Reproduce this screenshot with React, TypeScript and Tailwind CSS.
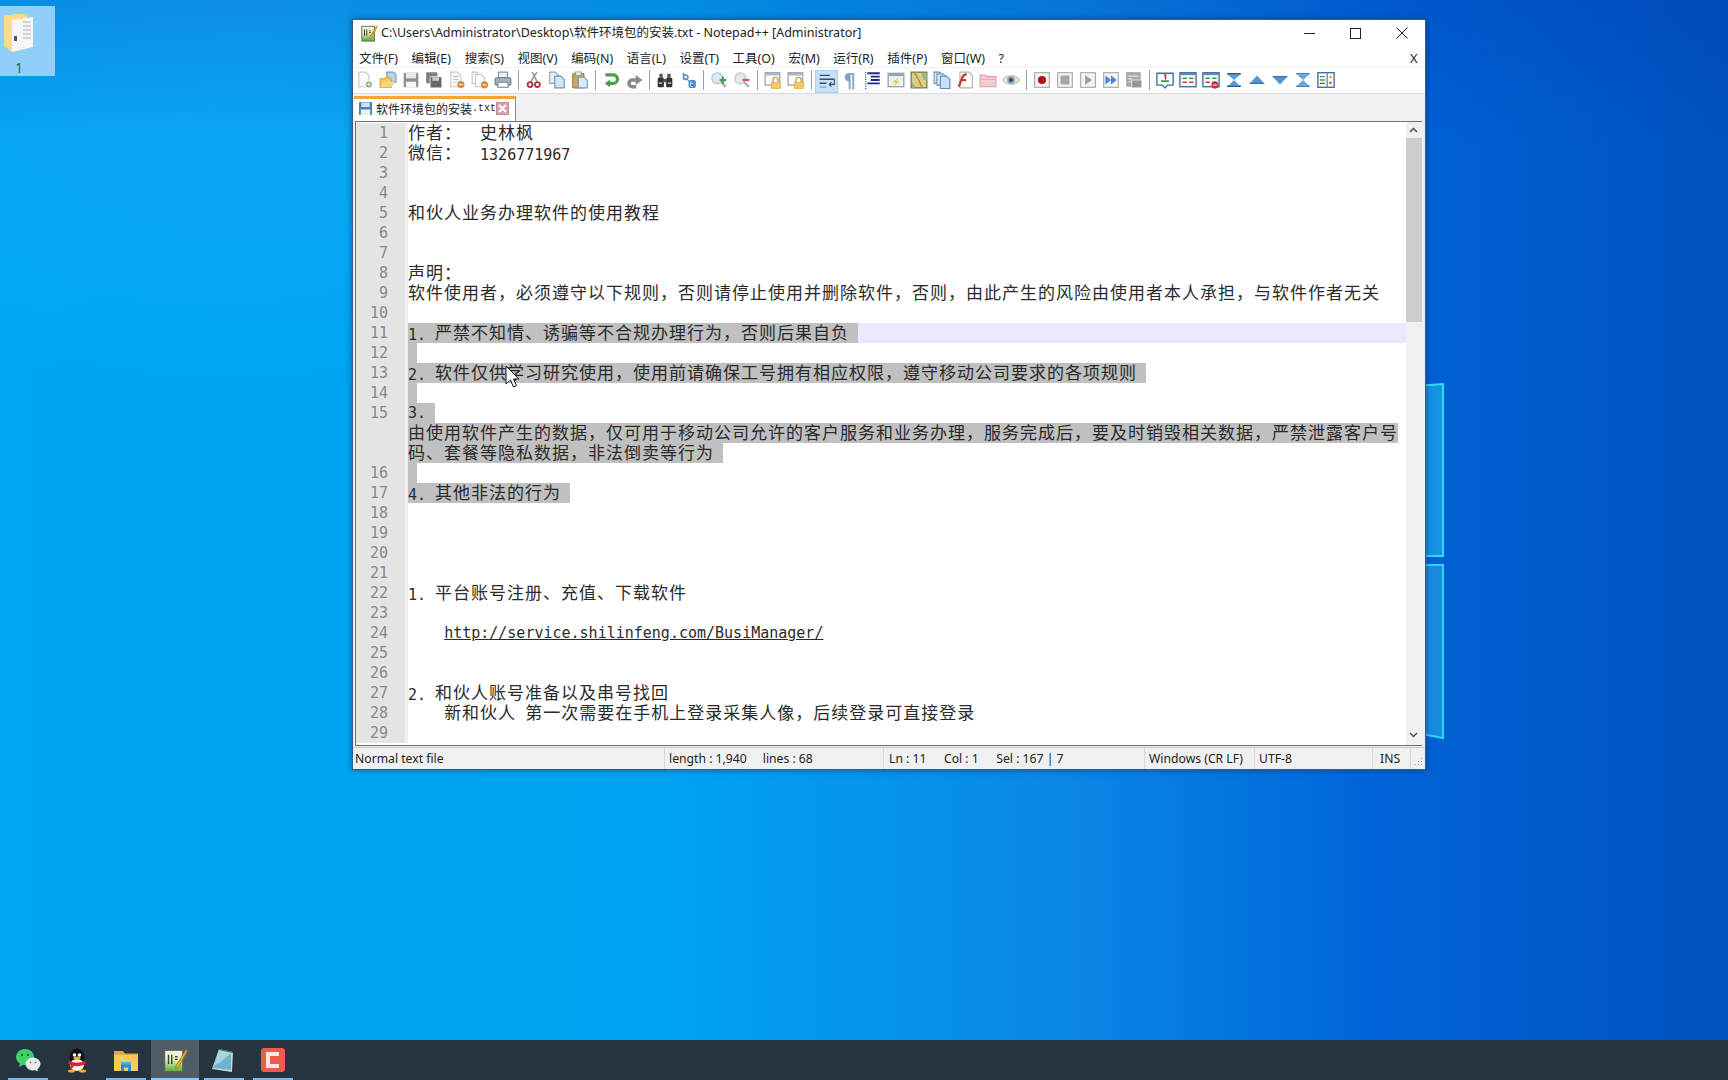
import React from "react";

const CJK = /([\u3000-\u303f\u3400-\u9fff\uff00-\uffef]+)/;

function Txt({ text }: { text: string }) {
  return (
    <>
      {text.split(CJK).map((s, i) =>
        CJK.test(s) ? (
          <span key={i} className="text-[17px] leading-none tracking-[1px] align-[1px] [font-family:'Noto_Sans_CJK_SC',sans-serif]">{s}</span>
        ) : (
          <span key={i}>{s}</span>
        )
      )}
    </>
  );
}

type Row = { n?: number; t?: string; sel?: boolean; eol?: boolean; cur?: boolean; url?: boolean };

const rows: Row[] = [
  { n: 1, t: "作者：  史林枫" },
  { n: 2, t: "微信：  1326771967" },
  { n: 3 },
  { n: 4 },
  { n: 5, t: "和伙人业务办理软件的使用教程" },
  { n: 6 },
  { n: 7 },
  { n: 8, t: "声明：" },
  { n: 9, t: "软件使用者，必须遵守以下规则，否则请停止使用并删除软件，否则，由此产生的风险由使用者本人承担，与软件作者无关" },
  { n: 10 },
  { n: 11, t: "1. 严禁不知情、诱骗等不合规办理行为，否则后果自负", sel: true, eol: true, cur: true },
  { n: 12, t: "", sel: true, eol: true },
  { n: 13, t: "2. 软件仅供学习研究使用，使用前请确保工号拥有相应权限，遵守移动公司要求的各项规则", sel: true, eol: true },
  { n: 14, t: "", sel: true, eol: true },
  { n: 15, t: "3.", sel: true, eol: true },
  { t: "由使用软件产生的数据，仅可用于移动公司允许的客户服务和业务办理，服务完成后，要及时销毁相关数据，严禁泄露客户号", sel: true },
  { t: "码、套餐等隐私数据，非法倒卖等行为", sel: true, eol: true },
  { n: 16, t: "", sel: true, eol: true },
  { n: 17, t: "4. 其他非法的行为", sel: true, eol: true },
  { n: 18 },
  { n: 19 },
  { n: 20 },
  { n: 21 },
  { n: 22, t: "1. 平台账号注册、充值、下载软件" },
  { n: 23 },
  { n: 24, t: "    http://service.shilinfeng.com/BusiManager/", url: true },
  { n: 25 },
  { n: 26 },
  { n: 27, t: "2. 和伙人账号准备以及串号找回" },
  { n: 28, t: "    新和伙人 第一次需要在手机上登录采集人像，后续登录可直接登录" },
  { n: 29 },
];

const menus = ["文件(F)", "编辑(E)", "搜索(S)", "视图(V)", "编码(N)", "语言(L)", "设置(T)", "工具(O)", "宏(M)", "运行(R)", "插件(P)", "窗口(W)", "?"];

const I = ({ children }: { children: React.ReactNode }) => (
  <svg viewBox="0 0 16 16" className="w-[18px] h-[18px]">{children}</svg>
);

const Page = ({ x = 2.5, y = 1, w = 9, h = 13, f = "#fbfbfb", s = "#c4c8cc" }: any) => (
  <path d={`M${x} ${y}h${w - 3}l3 3v${h - 3}h-${w}z`} fill={f} stroke={s} strokeWidth="1" />
);

const Win = ({ lock = false }: { lock?: boolean }) => (
  <>
    <rect x="1" y="1.5" width="13" height="11" fill="#fff" stroke="#8b97a3" />
    <rect x="1" y="1.5" width="13" height="2.5" fill="#a9b8c6" />
    {lock && (
      <>
        <path d="M8 10V8a2.3 2.3 0 0 1 4.6 0v2" fill="none" stroke="#c8a040" strokeWidth="1.2" />
        <rect x="6.5" y="10" width="8" height="5.5" fill="#f4cb60" stroke="#d8a838" strokeWidth=".6" />
      </>
    )}
  </>
);

const BoxI = ({ children }: { children: React.ReactNode }) => (
  <I>
    <rect x="1.5" y="1.5" width="13" height="13" fill="#f4f4f4" stroke="#a8a8a8" />
    {children}
  </I>
);

const Bm = ({ children }: { children?: React.ReactNode }) => (
  <I>
    <rect x=".8" y="1.5" width="14.4" height="12.5" fill="#fff" stroke="#3e6ea0" strokeWidth="1.2" />
    <rect x="1" y="1.5" width="14" height="2.2" fill="#5a8ac0" />
    <path d="M3 6.5h4M9 6.5h4" stroke="#3e9a44" strokeWidth="1.4" />
    <path d="M3 10h4M9 10h4" stroke="#c83c3c" strokeWidth="1.4" />
    {children}
  </I>
);

const tb: React.ReactNode[] = [
  <I key="new"><Page /><circle cx="11.5" cy="12" r="3" fill="#6fb56a" stroke="#fff" strokeWidth=".6" /><path d="M10 12h3M11.5 10.5v3" stroke="#fff" strokeWidth=".9" /></I>,
  <I key="open"><path d="M7 1h6l2 2v7H7z" fill="#bcd4ea" stroke="#6f9cc4" /><path d="M1 7h4l1-1.5h3L10 7h1v7.5H1z" fill="#f1c860" stroke="#d8a640" /><path d="M1 14.5l2-5h11l-3 5z" fill="#f7d77e" /></I>,
  <I key="save"><rect x="1.5" y="1.5" width="13" height="13" rx="1" fill="#8a9096" /><rect x="3.5" y="1.5" width="9" height="5" fill="#e6e8ea" /><rect x="3.5" y="9.5" width="9" height="5" fill="#f4f4f4" /></I>,
  <I key="saveall"><rect x="1" y="1" width="10" height="10" rx="1" fill="#7b8084" /><rect x="4.5" y="5" width="10.5" height="10" rx="1" fill="#666a6e" stroke="#fff" strokeWidth=".7" /><rect x="6.5" y="5.5" width="6" height="3.2" fill="#c9cbcd" /></I>,
  <I key="close"><Page /><path d="M4.5 5h5M4.5 7.5h5M4.5 10h3" stroke="#bcc0c4" /><circle cx="11.5" cy="12" r="3.2" fill="#e0853a" /><path d="M9.8 12h3.4" stroke="#fff" /></I>,
  <I key="closeall"><Page x={1} y={1} w={7} h={10} /><Page x={4} y={3} w={8} h={11} /><circle cx="12" cy="12.3" r="3.2" fill="#e0853a" /><path d="M10.3 12.3h3.4" stroke="#fff" /></I>,
  <I key="print"><rect x="4" y="1" width="8" height="5" fill="#eef1f4" stroke="#7c8c9c" /><rect x="1" y="6" width="14" height="6.5" rx="1.5" fill="#a5b0bb" stroke="#6b7987" /><rect x="3.5" y="10" width="9" height="4.5" fill="#fff" stroke="#7c8c9c" /></I>,
  "s",
  <I key="cut"><path d="M5 10L10.5 1M11 10L6.5 1" stroke="#8e959c" strokeWidth="1.3" /><circle cx="4.5" cy="12" r="2.2" fill="none" stroke="#b5343a" strokeWidth="1.6" /><circle cx="11" cy="12" r="2.2" fill="none" stroke="#b5343a" strokeWidth="1.6" /></I>,
  <I key="copy"><Page x={1.5} y={1} w={8} h={10} f="#e8eef5" s="#8aa5c2" /><Page x={6} y={4.5} w={8.5} h={10.5} f="#d4e4f4" s="#6d95bf" /></I>,
  <I key="paste"><rect x="1.5" y="2" width="10" height="13" rx="1" fill="#cda468" stroke="#a87f44" /><rect x="4" y=".8" width="5" height="3" fill="#e6e6e6" stroke="#888" strokeWidth=".6" /><Page x={6.5} y={5.5} w={8} h={9.5} f="#dceaf7" s="#7499bf" /></I>,
  "s",
  <I key="undo"><path d="M3 3.5h7a3.7 3.7 0 0 1 0 7.5H6" fill="none" stroke="#47a047" strokeWidth="2.8" /><path d="M7 7.5L2.5 11l4.5 3.5z" fill="#47a047" /></I>,
  <I key="redo"><path d="M13 8H6.5a3 3 0 0 0 0 6H10" fill="none" stroke="#868a8e" strokeWidth="3" /><path d="M9.5 3.5l6 4.5-6 4.5z" fill="#868a8e" /></I>,
  "s",
  <I key="find"><rect x="1.5" y="6" width="5.5" height="8.5" rx="1" fill="#2e3236" /><rect x="9" y="6" width="5.5" height="8.5" rx="1" fill="#2e3236" /><rect x="3" y="2.5" width="3" height="4" fill="#54585c" /><rect x="10" y="2.5" width="3" height="4" fill="#54585c" /><rect x="6.5" y="7" width="3" height="3" fill="#54585c" /><rect x="2.5" y="10" width="3" height="1.5" fill="#aeb2b6" /><rect x="10.5" y="10" width="3" height="1.5" fill="#aeb2b6" /></I>,
  <I key="replace"><path d="M4 1.5v6M4 5.5a2 2 0 1 1 0 .1" fill="none" stroke="#4a90d0" strokeWidth="1.4" /><path d="M6 6.5l3 2.5" stroke="#4a90d0" /><rect x="8.5" y="8" width="6.5" height="7" rx="1.5" fill="#4d8fcd" /><path d="M10.5 9.5v4h2M10.5 11.3h2" stroke="#dcebf7" /></I>,
  "s",
  <I key="zi"><circle cx="6.5" cy="6.5" r="4.8" fill="#dce9f2" stroke="#b4c4d0" strokeWidth="1.2" /><path d="M10 10l4 4" stroke="#a0a8b0" strokeWidth="2" /><path d="M11.5 5v6M8.5 8h6" stroke="#4a9a4a" strokeWidth="2" /></I>,
  <I key="zo"><circle cx="6.5" cy="6.5" r="4.8" fill="#e4e8f0" stroke="#c0c8d0" strokeWidth="1.2" /><path d="M10 10l4 4" stroke="#a8acb0" strokeWidth="2" /><path d="M8.5 8h6" stroke="#d0505c" strokeWidth="2" /></I>,
  "s",
  <I key="sv"><Win lock /></I>,
  <I key="sh"><Win lock /></I>,
  "s",
  <div key="wrap" className="w-[23px] h-[23px] mt-[2px] flex items-center justify-center bg-[#c6e0f5] border border-[#a8d0f0]"><I><path d="M1.5 3h9M1.5 6.5h13M1.5 10h6" stroke="#30506e" strokeWidth="1.3" /><path d="M14.5 6.5v4.5h-4M12 9l-2 2 2 2" fill="none" stroke="#30506e" /><path d="M1.5 13.5h6" stroke="#7fa0c0" /></I></div>,
  <span key="pil" className="text-[19px] leading-none font-bold text-[#7aa5c8] [font-family:'DejaVu_Sans',sans-serif]">¶</span>,
  <I key="ind"><path d="M3 2h11M6 5h8M6 8h8M3 11h11" stroke="#1c2c8c" strokeWidth="1.6" /><path d="M1.5 1v15" stroke="#1c2c8c" strokeDasharray="1 1" /></I>,
  <I key="lang"><rect x="1" y="2" width="14" height="12" fill="#eef0ea" stroke="#8b97a3" /><rect x="1" y="2" width="14" height="2.5" fill="#8aa6c2" /><path d="M10.5 5.5L5 10h3l-2.5 3.5L11 9H8z" fill="#efc040" /></I>,
  <I key="map"><rect x="1" y="1" width="14" height="14" fill="#d4cf8a" stroke="#6a6a50" /><path d="M4 1.5l4 7 3 6.5" stroke="#c89030" strokeWidth="1.4" fill="none" /><path d="M10 2h5v6h-3z" fill="#9ab57c" /><path d="M2 10l3 5H2z" fill="#8fae70" /></I>,
  <I key="dl"><Page x={1} y={1} w={8} h={10} f="#dfe9f3" s="#6f94ba" /><Page x={3.5} y={2.5} w={8.5} h={10} f="#e4eef8" s="#6f94ba" /><Page x={6.5} y={4.5} w={8.5} h={11} f="#c8e0f6" s="#5c8cc0" /></I>,
  <I key="fl"><Page x={3.5} y={1} w={11} h={14} f="#fff" s="#b0b0b0" /><path d="M2.5 14l3-8c.8-2.5 2.5-3 4-3M4 8h5" fill="none" stroke="#c03c40" strokeWidth="2" /></I>,
  <I key="fd"><path d="M1 3.5h5l1 1.5h8v9H1z" fill="#f3cdd2" stroke="#d8a0a8" /><path d="M1.5 7.5h13" stroke="#e6aeb6" /></I>,
  <I key="eye"><path d="M.5 8C4 3 12 3 15.5 8 12 13 4 13 .5 8z" fill="#e6ebee" stroke="#c8bca4" /><circle cx="8" cy="8" r="3.5" fill="#8ca4b8" /><circle cx="8" cy="8" r="1.7" fill="#2e4258" /></I>,
  "s",
  <BoxI key="rec"><circle cx="8" cy="8" r="3.6" fill="#b01218" /></BoxI>,
  <BoxI key="stop"><rect x="4" y="4" width="8" height="8" fill="#a4a4a4" /></BoxI>,
  <BoxI key="play"><path d="M5.5 3.5L11.5 8l-6 4.5z" fill="#a0a0a0" /></BoxI>,
  <BoxI key="multi"><path d="M3 4l5 4-5 4zM8 4l5 4-5 4z" fill="#4c84d8" /></BoxI>,
  <I key="savem"><rect x="1" y="1" width="13" height="13" fill="#a8a8a8" /><rect x="6" y="8" width="9" height="7" fill="#989898" stroke="#fff" strokeWidth=".6" /><path d="M3 4.5h9M3 7h3M3 9.5h3" stroke="#e8e8e8" /></I>,
  "s",
  <I key="b1"><path d="M.8 2h14.4v10.5h-5L8 15l-2.2-2.5h-5z" fill="#fff" stroke="#3e6ea0" strokeWidth="1.2" /><path d="M7 3.5h1.5v4" stroke="#c03030" strokeWidth="1.4" fill="none" /><path d="M4.5 9h7" stroke="#3e9a44" strokeWidth="1.6" /></I>,
  <Bm key="b2" />,
  <Bm key="b3"><circle cx="11.5" cy="12.5" r="3.2" fill="#d02c38" /><path d="M9.8 12.5h3.4" stroke="#fff" /></Bm>,
  <I key="b4"><path d="M2 2.500h12M2 13.500h12" stroke="#1f5f9c" strokeWidth="1.600" /><path d="M3 3.500h10L8 8zM8 8l5 5H3z" fill="#5a9ad2" /></I>,
  <I key="b5"><path d="M8 4l6.5 7h-13z" fill="#5694cf" /><path d="M1.5 11h13" stroke="#2d6aa2" /></I>,
  <I key="b6"><path d="M1.5 5h13L8 12z" fill="#5694cf" /><path d="M1.5 5h13" stroke="#2d6aa2" /></I>,
  <I key="b7"><path d="M2 2.500h12M2 13.500h12" stroke="#3f7cb4" strokeWidth="1.300" /><path d="M2.500 3h11L8 8zM8 8l5.500 5h-11z" fill="#6aa6da" /></I>,
  <I key="b8"><rect x=".8" y="1.500" width="14.400" height="13" fill="#fff" stroke="#3e6ea0" strokeWidth="1.200" /><path d="M2.500 5h4.500M2.500 8h4.500" stroke="#3e9a44" strokeWidth="1.300" /><path d="M2.500 11h4.500" stroke="#c83c3c" strokeWidth="1.300" /><path d="M9 2v12" stroke="#3e6ea0" /><path d="M11 4.500h2v2h-2z" fill="#d8a030" /><path d="M11 9.500h2v2h-2z" fill="#c83c3c" /></I>,
];

const NppIcon = ({ big = false }: { big?: boolean }) => (
  <svg viewBox="0 0 20 20" className={big ? "w-[26px] h-[26px]" : "w-[18px] h-[18px]"}>
    <defs>
      <linearGradient id={big ? "npg" : "npg2"} x1="0" y1="0" x2="0" y2="1">
        <stop offset="0" stopColor="#f4f6e8" />
        <stop offset=".45" stopColor="#e4edb0" />
        <stop offset="1" stopColor="#4fae3c" />
      </linearGradient>
    </defs>
    <rect x="2" y="2.500" width="14" height="16.500" fill={`url(#${big ? "npg" : "npg2"})`} stroke="#5c6a50" />
    <path d="M5 6v7M7.500 6v7" stroke="#344" strokeWidth="1.100" />
    <path d="M10 7.500h2M10 9.500h2" stroke="#445" />
    <path d="M11 14L18.500 2l1 1L13 15l-2.500 1.500z" fill="#e8b030" stroke="#9a6a18" strokeWidth=".5" />
  </svg>
);

function Notepad() {
  return (
    <div className="absolute left-[352px] top-[18.5px] w-[1073.500px] h-[751px] flex flex-col bg-[#f0f0f0] border border-[#2f5f90] shadow-[0_0_6px_rgba(0,30,90,0.55)] [font-family:'Noto_Sans','Noto_Sans_CJK_SC',sans-serif] text-[#1a1a1a]">
      {/* title bar */}
      <div className="h-[27px] bg-white flex items-center shrink-0 pl-[7px]">
        <NppIcon />
        <span className="ml-[3px] text-[12.500px] text-[#222] whitespace-nowrap">C:\Users\Administrator\Desktop\软件环境包的安装.txt - Notepad++ [Administrator]</span>
        <div className="ml-auto flex items-center h-full">
          <div className="w-[46px] flex justify-center"><svg width="11" height="11"><path d="M0 5.500h11" stroke="#222" /></svg></div>
          <div className="w-[46px] flex justify-center"><svg width="11" height="11"><rect x=".5" y=".5" width="10" height="10" fill="none" stroke="#222" /></svg></div>
          <div className="w-[46px] flex justify-center"><svg width="12" height="12"><path d="M.5.5l11 11M11.500.5l-11 11" stroke="#222" /></svg></div>
        </div>
      </div>
      {/* menu */}
      <div className="h-[20px] bg-white flex items-center shrink-0 pl-[6px] pr-[7px] pt-[5px] gap-[13.600px] text-[12.500px] text-[#222] whitespace-nowrap">
        {menus.map((m) => <span key={m}>{m}</span>)}
        <span className="ml-auto text-[13px]">X</span>
      </div>
      {/* toolbar */}
      <div className="h-[27px] bg-white border-t border-[#f0f0f0] border-b border-b-[#dcdcdc] shrink-0 flex items-center">
        {tb.map((c, i) =>
          c === "s" ? (
            <div key={i} className="w-[8px] h-[20px] flex justify-center"><div className="w-[1px] bg-[#a0a0a0]" /></div>
          ) : (
            <div key={i} className="w-[23px] h-[20px] flex items-center justify-center">{c}</div>
          )
        )}
      </div>
      {/* tab strip */}
      <div className="h-[27px] shrink-0 pt-[2px] pl-[1px] bg-[#f0f0f0] flex">
        <div className="w-[162px] h-[25px] bg-white border-t-[3px] border-t-[#f4a23c] border-r border-r-[#8a8a8a] flex items-center pl-[4px] pb-[2px]">
          <svg viewBox="0 0 16 16" className="w-[15px] h-[15px]"><rect x="1" y="1" width="14" height="14" rx="1" fill="#4a7fb5" /><rect x="3.500" y="1.500" width="9" height="5" fill="#cfe0f0" /><rect x="3" y="9" width="10" height="6" fill="#e8f0f8" /></svg>
          <span className="ml-[3px] text-[12px] leading-none whitespace-nowrap [font-family:'Noto_Sans_CJK_SC',sans-serif] text-[#222]">软件环境包的安装</span>
          <span className="text-[10px] leading-none [font-family:'Liberation_Mono',monospace] text-[#222]">.txt</span>
          <span className="w-[13px] h-[13px] bg-[#d9a2ab] border border-[#c98a96] flex items-center justify-center">
            <svg width="9" height="9"><path d="M1 1l7 7M8 1l-7 7" stroke="#fff" strokeWidth="2" /></svg>
          </span>
        </div>
      </div>
      {/* editor */}
      <div className="h-[625px] shrink-0 ml-[2px] mr-[3px] border-t border-l border-b border-[#707070] flex overflow-hidden bg-white">
        <div className="flex-1 min-w-0 overflow-hidden pt-[1px] [font-family:'DejaVu_Sans_Mono','Noto_Sans_CJK_SC',monospace] text-[15px] leading-[20px] text-[#2a2a2a]">
          {rows.map((r, i) => (
            <div key={i} className="flex h-[20px]">
              <div className="w-[32px] pr-0 shrink-0 bg-[#e4e4e4] text-right text-[#888888]">{r.n}</div>
              <div className="w-[17px] shrink-0 bg-[#e4e4e4]" />
              <div className="w-[3px] shrink-0 bg-[#f1f1f1]" />
              <div className={r.cur ? "flex-1 min-w-0 bg-[#e8e8ff] whitespace-pre" : "flex-1 min-w-0 whitespace-pre"}>
                {r.t !== undefined &&
                  (r.sel ? (
                    <span className={r.eol ? "inline-block h-[20px] pr-[9px] bg-[#c0c0c0] align-top" : "inline-block h-[20px] bg-[#c0c0c0] align-top"}><Txt text={r.t} /></span>
                  ) : r.url ? (
                    <span>{"    "}<span className="underline">{r.t.trim()}</span></span>
                  ) : (
                    <Txt text={r.t} />
                  ))}
              </div>
            </div>
          ))}
        </div>
        {/* scrollbar */}
        <div className="w-[16px] shrink-0 bg-[#f0f0f0] flex flex-col items-center pb-[2px]">
          <div className="h-[16px] flex items-center"><svg width="9" height="6"><path d="M1 5l3.500-3.500L8 5" fill="none" stroke="#505050" strokeWidth="1.500" /></svg></div>
          <div className="w-full h-[184px] bg-[#cdcdcd]" />
          <div className="mt-auto h-[16px] flex items-center"><svg width="9" height="6"><path d="M1 1l3.500 3.500L8 1" fill="none" stroke="#505050" strokeWidth="1.500" /></svg></div>
        </div>
      </div>
      {/* status */}
      <div className="flex-1 mt-[1px] border-t border-[#c8c8c8] flex items-center text-[12.200px] text-[#222] whitespace-nowrap">
        <div className="w-[311px] pl-[2px] pt-[2px]">Normal text file</div>
        <div className="w-[219px] h-full border-l border-[#d8d8d8] pl-[4px] pt-[2px] flex items-center gap-[16px]"><span>length : 1,940</span><span>lines : 68</span></div>
        <div className="w-[261px] h-full border-l border-[#d8d8d8] pl-[5px] pt-[2px] flex items-center gap-[17.500px]"><span>Ln : 11</span><span>Col : 1</span><span>Sel : 167 | 7</span></div>
        <div className="w-[110px] h-full border-l border-[#d8d8d8] pl-[4px] pt-[2px] flex items-center">Windows (CR LF)</div>
        <div className="w-[118px] h-full border-l border-[#d8d8d8] pl-[4px] pt-[2px] flex items-center">UTF-8</div>
        <div className="w-[38px] h-full border-l border-[#d8d8d8] pl-[7px] pt-[2px] flex items-center">INS</div>
        <div className="flex-1 h-full border-l border-[#d8d8d8] flex items-end justify-end pr-[2px] pb-[2px]">
          <svg width="10" height="10"><path d="M8 1h1v1H8zM5 4h1v1H5zM8 4h1v1H8zM2 7h1v1H2zM5 7h1v1H5zM8 7h1v1H8z" fill="#a8a8a8" /></svg>
        </div>
      </div>
    </div>
  );
}

const tasks = [
  { u: true, a: false, i: (
    <svg viewBox="0 0 26 26" className="w-[26px] h-[26px]"><ellipse cx="10" cy="10" rx="9" ry="8" fill="#3fd26a" /><path d="M5 16l-1 4 5-2.500z" fill="#3fd26a" /><circle cx="7" cy="8" r="1.200" fill="#12702e" /><circle cx="13" cy="8" r="1.200" fill="#12702e" /><ellipse cx="18" cy="17" rx="7.500" ry="6.500" fill="#e8eceb" /><path d="M22 21.500l1 3-4-2z" fill="#e8eceb" /><circle cx="15.500" cy="15.500" r="1" fill="#8a9490" /><circle cx="20.500" cy="15.500" r="1" fill="#8a9490" /></svg>
  ) },
  { u: false, a: false, i: (
    <svg viewBox="0 0 26 26" className="w-[26px] h-[26px]"><ellipse cx="13" cy="11" rx="7.500" ry="9.500" fill="#111" /><ellipse cx="13" cy="18" rx="7" ry="6" fill="#f2f2f2" /><path d="M5 13.500c5 3 11 3 16 0l1 3c-5 3.500-13 3.500-18 0z" fill="#d8232a" /><path d="M7 16l-1 6 4-2z" fill="#d8232a" /><circle cx="10.500" cy="8" r="1.800" fill="#fff" /><circle cx="15.500" cy="8" r="1.800" fill="#fff" /><ellipse cx="13" cy="11" rx="3.500" ry="1.500" fill="#f4b020" /><ellipse cx="7.500" cy="24" rx="3.500" ry="1.500" fill="#f4b020" /><ellipse cx="18.500" cy="24" rx="3.500" ry="1.500" fill="#f4b020" /></svg>
  ) },
  { u: true, a: false, i: (
    <svg viewBox="0 0 26 26" className="w-[26px] h-[26px]"><path d="M1 4h9l2 2.500h13v3H1z" fill="#e3a83c" /><rect x="1" y="8" width="24" height="16" fill="#f5cc5c" /><path d="M8 24v-7h10v7h-3v-3.500h-4V24z" fill="#2f8fd0" /><rect x="8" y="15" width="10" height="2.500" fill="#4ab0e8" /></svg>
  ) },
  { u: true, a: true, i: <NppIcon big /> },
  { u: true, a: false, i: (
    <svg viewBox="0 0 26 26" className="w-[26px] h-[26px]"><path d="M8 2l14 3-1 20-20-3z" fill="#cfd4d6" /><path d="M8 3l12 3 0 17-18-2z" fill="#6fb3d0" /><path d="M8 3l12 3-9 8-8 5z" fill="#a6d6e6" /><path d="M8 2l14 3v1L8 3z" fill="#3d5c72" /></svg>
  ) },
  { u: true, a: false, i: (
    <svg viewBox="0 0 26 26" className="w-[26px] h-[26px]"><rect x="1" y="1" width="24" height="24" rx="3" fill="#ef5a4c" /><path d="M19 7H8v12h11" fill="none" stroke="#fbe9e4" strokeWidth="4" /></svg>
  ) },
];

export default function App() {
  return (
    <div className="relative w-[1728px] h-[1080px] overflow-hidden flex flex-col">
      <div className="relative flex-1 bg-[linear-gradient(180deg,rgba(0,50,170,0.22)_0%,rgba(0,50,170,0)_14%),radial-gradient(ellipse_at_14%_2%,#10a8f4_0%,transparent_26%),linear-gradient(90deg,#00a6f2_0%,#00a4f2_38%,#0a86e6_62%,#0064d8_80%,#0052bf_100%)]">
        {/* wallpaper logo edge */}
        <svg className="absolute left-[1400px] top-[370px]" width="60" height="380">
          <path d="M0 17L43 14V186H0z" fill="#1592e4" />
          <path d="M0 195H43V368L0 360z" fill="#1a8ce0" />
          <path d="M0 17L43 14V186H0" fill="none" stroke="#30dcf8" strokeWidth="2" />
          <path d="M0 195H43V368L0 360" fill="none" stroke="#30d4f8" strokeWidth="2" />
        </svg>
        {/* desktop icon */}
        <div className="absolute left-0 top-[6px] w-[55px] h-[70px] bg-[#8fcff8] flex flex-col items-start">
          <svg viewBox="0 0 32 42" className="mt-[6px] ml-[3px] w-[32px] h-[42px]">
            <path d="M1 3h8l2-1h13v34L9 40 1 34z" fill="#f8dc8a" />
            <path d="M9 8l21-3v30L9 40z" fill="#f6f6f6" />
            <path d="M20 10h8M20 14h8M20 18h8M20 22h8M20 26h8" stroke="#b0b0b0" />
            <rect x="11" y="24" width="3" height="5" fill="#555" />
          </svg>
          <span className="mt-[7px] ml-[15px] text-[14px] leading-none text-[#3a5a78] [font-family:'Noto_Sans',sans-serif]">1</span>
        </div>
        <Notepad />
        {/* cursor */}
        <svg className="absolute left-[505px] top-[365px]" width="15" height="24" viewBox="0 0 15 24">
          <path d="M1 1v18l4.500-4 3 7 3-1.300-3-6.700H14z" fill="#fff" stroke="#111" strokeWidth="1" />
        </svg>
      </div>
      {/* taskbar */}
      <div className="h-[40px] bg-[#26343f] flex items-stretch shrink-0 pl-[4px] gap-[1px]">
        {tasks.map((t, i) => (
          <div key={i} className={t.a ? "w-[48px] relative flex items-center justify-center bg-[#4f5c66]" : "w-[48px] relative flex items-center justify-center"}>
            {t.i}
            {t.u && <div className={t.a ? "absolute bottom-0 inset-x-0 h-[2px] bg-[#8cc6f2]" : "absolute bottom-0 inset-x-[4px] h-[2px] bg-[#76b9ed]"} />}
          </div>
        ))}
      </div>
    </div>
  );
}
